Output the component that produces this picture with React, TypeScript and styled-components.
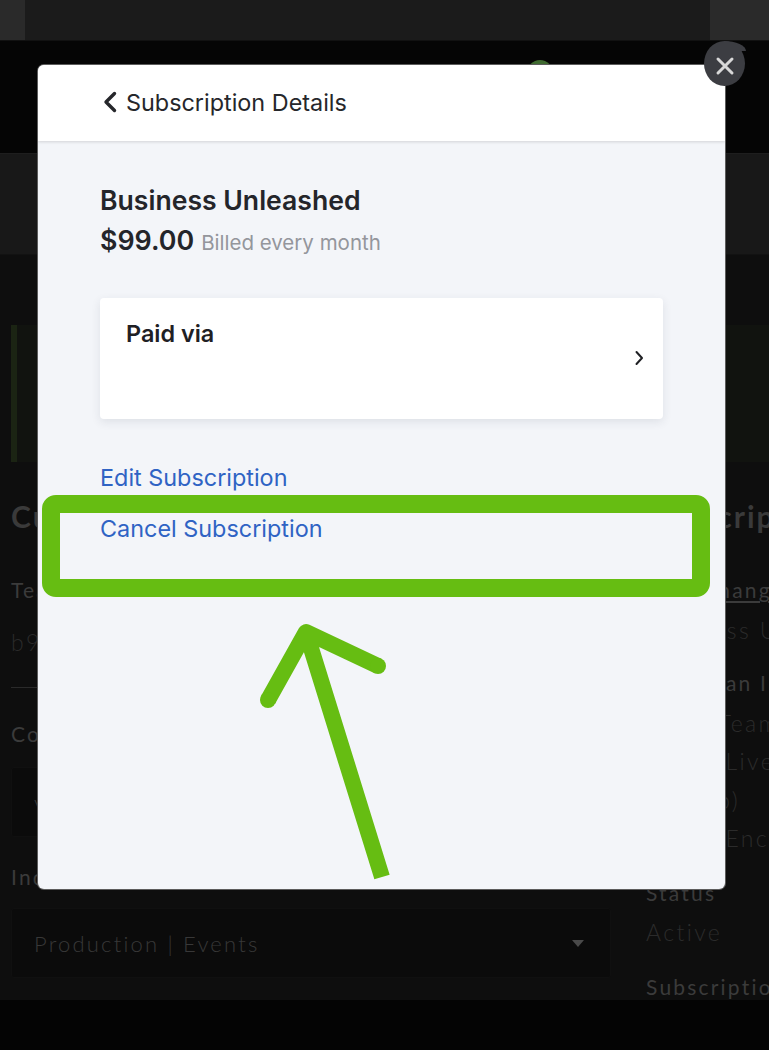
import styled, { createGlobalStyle } from "styled-components";

const GlobalStyle = createGlobalStyle`
  html, body {
    margin: 0;
    padding: 0;
    background: #fff;
  }
  * {
    box-sizing: border-box;
  }
`;

const Page = styled.div`
  position: relative;
  width: 769px;
  height: 1050px;
  overflow: hidden;
  background: #040404;
  font-family: Lato, "Open Sans", sans-serif;
`;

const TopBar = styled.div`
  height: 41px;
  display: flex;
  background: #1b1b1b;
  border-bottom: 1px solid #111;
`;

const TopBarEnd = styled.div<{ $width: number }>`
  width: ${(p) => p.$width}px;
  background: #2a2a2a;
  &:last-child {
    margin-left: auto;
  }
`;

const Header = styled.div`
  height: 112px;
  background: #050505;
`;

const TabStrip = styled.div`
  height: 102px;
  background: #181818;
  border-top: 1px solid #1e1e1e;
  border-bottom: 1px solid #121212;
`;

const Content = styled.div`
  height: 745px;
  padding: 70px 0 0 11px;
  background: #0e0e0e;
  overflow: hidden;
`;

const Banner = styled.div`
  height: 137px;
  display: flex;
  background: #11130f;
`;

const BannerEdge = styled.div`
  width: 6px;
  background: #1b2413;
`;

const Columns = styled.div`
  display: grid;
  grid-template-columns: 600px 200px;
  column-gap: 35px;
  margin-top: 32px;
`;

const Column = styled.div`
  display: flex;
  flex-direction: column;
`;

const SectionTitle = styled.div`
  font-size: 30px;
  line-height: 44px;
  font-weight: 700;
  letter-spacing: 2px;
  color: #3a3a3a;
  white-space: nowrap;
`;

const Label = styled.div<{ $top: number }>`
  margin-top: ${(p) => p.$top}px;
  font-size: 21px;
  line-height: 30px;
  font-weight: 400;
  letter-spacing: 2.2px;
  color: #3b3b3b;
  white-space: nowrap;
`;

const Value = styled.div<{ $top: number }>`
  margin-top: ${(p) => p.$top}px;
  font-size: 23px;
  line-height: 30px;
  font-weight: 300;
  letter-spacing: 2.4px;
  color: #2b2b2b;
  white-space: nowrap;
`;

const Underlined = styled(Label)`
  text-decoration: underline;
  text-underline-offset: 3px;
`;

const Divider = styled.div`
  height: 1px;
  margin-top: 30px;
  background: #2a2a2a;
`;

const Select = styled.div<{ $top: number }>`
  height: 70px;
  margin-top: ${(p) => p.$top}px;
  padding: 0 26px 0 22px;
  display: flex;
  align-items: center;
  justify-content: space-between;
  background: #0b0b0b;
  border: 1px solid #101010;
  border-radius: 3px;
  font-size: 22px;
  font-weight: 300;
  letter-spacing: 2.2px;
  color: #383838;
`;

const Caret = styled.span`
  width: 0;
  height: 0;
  border-left: 6px solid transparent;
  border-right: 6px solid transparent;
  border-top: 7px solid #4a4a4a;
`;

const PeekDot = styled.div`
  position: absolute;
  left: 527px;
  top: 60px;
  width: 26px;
  height: 26px;
  border-radius: 50%;
  background: #3f6a30;
`;

const Modal = styled.div`
  position: absolute;
  left: 38px;
  top: 65px;
  width: 687px;
  height: 824px;
  background: #f3f5f9;
  border-radius: 6px;
  box-shadow: 0 0 0 1px #5c5c5c;
  overflow: hidden;
  font-family: Inter, "Noto Sans", sans-serif;
`;

const ModalHeader = styled.div`
  height: 76px;
  padding: 0 0 2px 64px;
  display: flex;
  align-items: center;
  gap: 8px;
  background: #fff;
  box-shadow: 0 1px 3px rgba(0, 0, 0, 0.14);
  font-size: 23.4px;
  color: #26272b;
`;

const ModalBody = styled.div`
  padding: 41px 62px 0;
`;

const PlanName = styled.div`
  font-size: 26.6px;
  line-height: 36px;
  font-weight: 600;
  color: #24252a;
`;

const PriceRow = styled.div`
  margin-top: 4px;
  display: flex;
  align-items: baseline;
  gap: 7px;
`;

const Price = styled.span`
  font-size: 26.8px;
  line-height: 36px;
  font-weight: 600;
  color: #24252a;
`;

const Billing = styled.span`
  font-size: 20.5px;
  color: #94969c;
`;

const PaymentCard = styled.div`
  position: relative;
  height: 121px;
  margin-top: 40px;
  padding: 21px 26px;
  background: #fff;
  border-radius: 4px;
  box-shadow: 0 3px 10px rgba(40, 50, 70, 0.1);
  font-size: 23.4px;
  line-height: 30px;
  font-weight: 600;
  color: #1f2024;
`;

const CardChevron = styled.svg`
  position: absolute;
  right: 19px;
  top: 52px;
`;

const LinkList = styled.div`
  margin-top: 44px;
  display: flex;
  flex-direction: column;
  gap: 21px;
`;

const ActionLink = styled.a`
  font-size: 23.4px;
  line-height: 30px;
  color: #2f63c4;
  cursor: pointer;
`;

const HighlightBox = styled.div`
  position: absolute;
  left: 42px;
  top: 495px;
  width: 668px;
  height: 102px;
  border: 18px solid #66bd12;
  border-radius: 14px;
  background-clip: padding-box;
  pointer-events: none;
`;

const Arrow = styled.svg`
  position: absolute;
  left: 250px;
  top: 610px;
`;

const CloseButton = styled.button`
  position: absolute;
  left: 704px;
  top: 41px;
  width: 41px;
  height: 45px;
  padding: 0;
  display: flex;
  align-items: center;
  justify-content: center;
  border: 0;
  border-radius: 50%;
  background: #3c3d42;
  cursor: pointer;
  &::before {
    content: "";
    position: absolute;
    top: 0;
    right: -1px;
    width: 22px;
    height: 10px;
    background: #3c3d42;
    border-radius: 0 100% 0 0;
  }
  svg {
    position: relative;
    top: 2px;
  }
`;

export default function App() {
  return (
    <>
      <GlobalStyle />
      <Page>
        <TopBar>
          <TopBarEnd $width={25} />
          <TopBarEnd $width={59} />
        </TopBar>
        <Header />
        <TabStrip />
        <Content>
          <Banner>
            <BannerEdge />
          </Banner>
          <Columns>
            <Column>
              <SectionTitle>Current Settings</SectionTitle>
              <Label $top={37}>Team ID</Label>
              <Value $top={22}>b9f3a7c2</Value>
              <Divider />
              <Label $top={31}>Company</Label>
              <Select $top={18}>vMix Studio</Select>
              <Label $top={25}>Industry</Label>
              <Select $top={16}>
                Production | Events
                <Caret />
              </Select>
            </Column>
            <Column>
              <SectionTitle>Subscription</SectionTitle>
              <Underlined $top={37}>Plan Change</Underlined>
              <Value $top={10}>Business Unleashed</Value>
              <Label $top={23}>Your Plan Includes</Label>
              <Value $top={10}>Small Team</Value>
              <Value $top={8}>Cloud Live</Value>
              <Value $top={9}>(1080p)</Value>
              <Value $top={8}>Cloud Encoding</Value>
              <Label $top={25}>Status</Label>
              <Value $top={9}>Active</Value>
              <Label $top={25}>Subscription</Label>
            </Column>
          </Columns>
        </Content>

        <PeekDot />

        <Modal>
          <ModalHeader>
            <svg width="16" height="22" viewBox="0 0 16 22">
              <path d="M12.5 2.5 L4 11 L12.5 19.5" fill="none" stroke="#26272b" strokeWidth="3.4" strokeLinecap="round" strokeLinejoin="round" />
            </svg>
            Subscription Details
          </ModalHeader>
          <ModalBody>
            <PlanName>Business Unleashed</PlanName>
            <PriceRow>
              <Price>$99.00</Price>
              <Billing>Billed every month</Billing>
            </PriceRow>
            <PaymentCard>
              Paid via
              <CardChevron width="10" height="16" viewBox="0 0 10 16">
                <path d="M2.5 2 L8 8 L2.5 14" fill="none" stroke="#1f2024" strokeWidth="2" strokeLinecap="round" strokeLinejoin="round" />
              </CardChevron>
            </PaymentCard>
            <LinkList>
              <ActionLink>Edit Subscription</ActionLink>
              <ActionLink>Cancel Subscription</ActionLink>
            </LinkList>
          </ModalBody>
        </Modal>

        <CloseButton aria-label="Close">
          <svg width="20" height="20" viewBox="0 0 20 20">
            <path d="M3 3 L17 17 M17 3 L3 17" stroke="#d8d8d8" strokeWidth="3" strokeLinecap="round" />
          </svg>
        </CloseButton>

        <HighlightBox />
        <Arrow width="150" height="280" viewBox="0 0 150 280">
          <path
            d="M18 90 L56 22 L128 56 M56 22 L132 267"
            fill="none"
            stroke="#66bd12"
            strokeWidth="16"
            strokeLinejoin="round"
          />
          <circle cx="18" cy="90" r="8" fill="#66bd12" />
          <circle cx="128" cy="56" r="8" fill="#66bd12" />
        </Arrow>
      </Page>
    </>
  );
}
